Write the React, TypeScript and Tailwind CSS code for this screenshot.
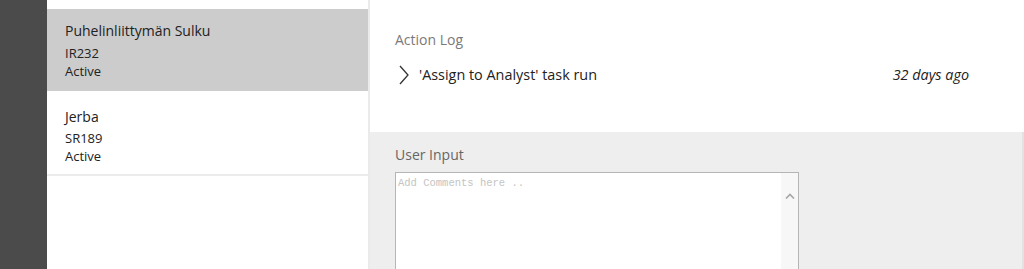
export default function App() {
  return (
    <div
      className="flex h-[269px] w-[1024px] overflow-hidden bg-white text-[#222]"
      style={{ fontFamily: '"Segoe UI", "Open Sans", "Noto Sans", sans-serif' }}
    >
      {/* dark app rail */}
      <div className="w-[47px] shrink-0 bg-[#4b4b4b]" />

      {/* item list */}
      <div className="flex w-[321px] shrink-0 flex-col pt-[9px]">
        <div className="h-[82px] bg-[#cccccc] pl-[18px] pt-[12px]">
          <div className="text-[14px] leading-[20px]">Puhelinliittymän Sulku</div>
          <div className="mt-[3px] text-[13px] leading-[18px]">IR232</div>
          <div className="text-[13px] leading-[18px]">Active</div>
        </div>
        <div className="h-[85px] border-b-2 border-[#ececec] pl-[18px] pt-[16px]">
          <div className="text-[14px] leading-[20px]">Jerba</div>
          <div className="mt-[2px] text-[13px] leading-[18px]">SR189</div>
          <div className="text-[13px] leading-[18px]">Active</div>
        </div>
      </div>

      <div className="w-[2px] shrink-0 bg-[#eaeaea]" />

      {/* detail */}
      <div className="flex flex-1 flex-col">
        <div className="h-[132px] shrink-0 pl-[25px] pr-[55px] pt-[30px]">
          <div className="text-[14px] leading-[20px] text-[#7a7a7a]">Action Log</div>
          <div className="mt-[15px] flex items-center">
            <svg width="12" height="20" viewBox="0 0 12 20" className="ml-[3px] mr-[9px]">
              <path d="M2 1 L10 10 L2 19" fill="none" stroke="#333" strokeWidth="1.3" />
            </svg>
            <span className="text-[14.4px] leading-[20px]">'Assign to Analyst' task run</span>
            <span className="ml-auto text-[14.4px] italic leading-[20px]">32 days ago</span>
          </div>
        </div>

        <div className="flex flex-1 flex-col border-r-2 border-[#e2e2e2] bg-[#eeeeee] pl-[25px] pt-[13px]">
          <div className="text-[14px] leading-[20px] text-[#666]">User Input</div>
          <div className="mt-[7px] flex h-[120px] w-[404px] border border-[#b5b5b5] bg-white">
            <div
              className="flex-1 pl-[2px] pt-[3px] text-[10.5px] leading-[14px] text-[#c4c4c4]"
              style={{ fontFamily: '"Liberation Mono", "DejaVu Sans Mono", monospace' }}
            >
              Add Comments here ..
            </div>
            <div className="flex w-[17px] justify-center bg-[#f7f7f7] pt-[20px]">
              <svg width="10" height="6" viewBox="0 0 10 6">
                <path d="M1 5.5 L5 1.5 L9 5.5" fill="none" stroke="#a6a6a6" strokeWidth="1.6" />
              </svg>
            </div>
          </div>
        </div>
      </div>
    </div>
  );
}
